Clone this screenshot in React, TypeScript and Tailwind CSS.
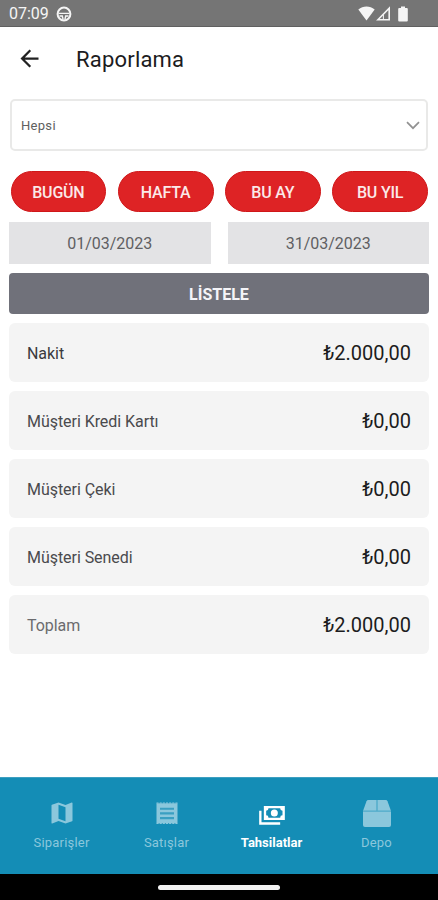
import React, { useState } from 'react'
import { MdMap, MdArrowBack } from 'react-icons/md'

const periods = ['BUGÜN', 'HAFTA', 'BU AY', 'BU YIL']

const rows = [
  { label: 'Nakit', value: '₺2.000,00', color: 'text-[#3a3a3d]' },
  { label: 'Müşteri Kredi Kartı', value: '₺0,00', color: 'text-[#4a4a4d]' },
  { label: 'Müşteri Çeki', value: '₺0,00', color: 'text-[#4a4a4d]' },
  { label: 'Müşteri Senedi', value: '₺0,00', color: 'text-[#4a4a4d]' },
  { label: 'Toplam', value: '₺2.000,00', color: 'text-[#6b6b6e]' },
]

function ReceiptIcon() {
  return (
    <svg viewBox="0 0 28 28" className="w-7 h-7">
      <path d="M3.5 4.3H24.5V24.2H3.5Z" fill="currentColor" />
      <path d="M3.5 4H24.5M3.5 24.5H24.5" stroke="currentColor" strokeWidth="1" strokeDasharray="2.1 1.05" />
      <path d="M7 9.7H21M7 14.4H21M7 19.1H21" stroke="#3a9fc1" strokeWidth="2.1" />
    </svg>
  )
}

function CashIcon() {
  return (
    <svg viewBox="0 0 24 24" className="w-7 h-7" fill="currentColor">
      <path d="M5,6H23V18H5V6M14,9A3,3 0 0,1 17,12A3,3 0 0,1 14,15A3,3 0 0,1 11,12A3,3 0 0,1 14,9M9,8A2,2 0 0,1 7,10V14A2,2 0 0,1 9,16H19A2,2 0 0,1 21,14V10A2,2 0 0,1 19,8H9M1,10H3V20H19V22H1V10Z" />
    </svg>
  )
}

function BoxIcon() {
  return (
    <svg viewBox="0 0 28 28" className="w-7 h-7">
      <path d="M5.3 1H22.7Q24 1 24.5 2.3L28 12V26Q28 28 26 28H2Q0 28 0 26V12L3.5 2.3Q4 1 5.3 1Z" fill="currentColor" />
      <path d="M14 1V12M0 12.1H28" stroke="#4fabc9" strokeWidth="1.4" />
    </svg>
  )
}

const tabs = [
  { id: 'siparisler', label: 'Siparişler', icon: <MdMap className="w-7 h-7" /> },
  { id: 'satislar', label: 'Satışlar', icon: <ReceiptIcon /> },
  { id: 'tahsilatlar', label: 'Tahsilatlar', icon: <CashIcon /> },
  { id: 'depo', label: 'Depo', icon: <BoxIcon /> },
]

function StatusBar() {
  return (
    <div className="h-[27px] flex-shrink-0 flex items-center justify-between bg-[#757575] border-b border-[#606060] pl-[9px] pr-[30px] pt-[2px] text-[#f5f5f5]">
      <div className="flex items-center gap-[7px]">
        <span className="text-[16px] leading-none">07:09</span>
        <svg viewBox="0 0 16 16" className="w-4 h-4 -mt-px" fill="none" stroke="currentColor">
          <circle cx="8" cy="8" r="6.4" strokeWidth="2" />
          <path d="M2.5 7.4H13.5M3.5 10h2.8l.8 3.6M12.5 10H9.7l-.8 3.6" strokeWidth="1.4" />
        </svg>
      </div>
      <div className="flex items-center -mt-px">
        <svg viewBox="0 0 17 15" className="w-[17px] h-[15px]" fill="currentColor">
          <path d="M0.3 3.6C5 -0.6 12 -0.6 16.7 3.6L8.5 14.6Z" />
        </svg>
        <svg viewBox="0 0 15 15" className="w-[15px] h-[15px] ml-px" fill="none" stroke="currentColor">
          <path d="M1.9 13.8L13.2 2.2V13.8Z" strokeWidth="1.6" />
          <path d="M7.4 13.8V8.6" strokeWidth="1" />
        </svg>
        <svg viewBox="0 0 10 16" className="w-[10px] h-4 ml-[7px]" fill="currentColor">
          <path d="M3 0.5h4v1.6h1.8a1 1 0 0 1 1 1V14.5a1 1 0 0 1-1 1H1.2a1 1 0 0 1-1-1V3.1a1 1 0 0 1 1-1H3Z" />
        </svg>
      </div>
    </div>
  )
}

export default function Raporlama() {
  const [activeTab, setActiveTab] = useState('tahsilatlar')

  return (
    <div className="w-full h-[900px] flex flex-col overflow-hidden bg-white font-['Roboto',sans-serif]">
      <StatusBar />

      <header className="h-[65px] flex-shrink-0 flex items-center pl-[16px]">
        <MdArrowBack className="w-[27px] h-[27px] -mt-[2px] text-[#222]" />
        <h1 className="ml-[33px] text-[22px] leading-none tracking-[0.2px] text-[#1c1c1e]">Raporlama</h1>
      </header>

      <main className="flex-1 flex flex-col px-[9px] pt-[7px]">
        {/* Ödeme tipi seçimi */}
        <div className="h-[52px] mx-px flex items-center justify-between rounded-[5px] border-2 border-[#e9e9e8] pl-[9px] pr-[6px]">
          <span className="mt-[2px] text-[13px] tracking-[0.3px] text-[#606060]">Hepsi</span>
          <svg viewBox="0 0 14 9" className="w-[14px] h-[9px]" fill="none" stroke="#929292" strokeWidth="1.7">
            <path d="M1 1.2L7 7.2L13 1.2" />
          </svg>
        </div>

        {/* Tarih aralığı */}
        <div className="grid grid-cols-4 gap-[11.5px] mt-5 ml-[1.5px] mr-px">
          {periods.map((p) => (
            <button key={p} className="h-[41px] pt-[2px] rounded-full bg-[#de2325] border border-[#cf1719] text-[16px] font-medium tracking-[-0.2px] text-[#fbe9e9]">
              {p}
            </button>
          ))}
        </div>
        <div className="grid grid-cols-2 gap-[17px] mt-[10px] text-[16px] text-[#5f5f62]">
          <div className="h-[42px] pt-[2px] flex items-center justify-center bg-[#e3e3e5]">01/03/2023</div>
          <div className="h-[42px] pt-[2px] flex items-center justify-center bg-[#e3e3e5]">31/03/2023</div>
        </div>
        <button className="h-[41px] pt-[2px] mt-[9px] rounded-[4px] bg-[#70717a] text-[16px] font-bold text-[#f4f4f8]">
          LİSTELE
        </button>

        {/* Tahsilat toplamları */}
        <div className="flex flex-col gap-[9px] mt-[9px]">
          {rows.map((row) => (
            <div key={row.label} className="h-[59px] flex items-center justify-between rounded-[6px] bg-[#f4f4f4] px-[18px]">
              <span className={`mt-[2px] text-[16px] tracking-[-0.05px] ${row.color}`}>{row.label}</span>
              <span className="text-[20px] text-[#1c1c20]">{row.value}</span>
            </div>
          ))}
        </div>
      </main>

      <nav className="h-[97px] flex-shrink-0 grid grid-cols-4 px-[9px] bg-[#148db6] border-t border-[#3d9fc0]">
        {tabs.map((tab) => (
          <button
            key={tab.id}
            onClick={() => setActiveTab(tab.id)}
            className={`flex flex-col items-center pt-[21px] text-[13px] leading-[15px] ${
              activeTab === tab.id ? 'font-bold text-white' : 'tracking-[0.2px] text-[#8bc7dc]'
            }`}
          >
            {tab.icon}
            <span className="mt-[8px]">{tab.label}</span>
          </button>
        ))}
      </nav>
      <div className="h-[26px] flex-shrink-0 flex justify-center pt-[11px] bg-black">
        <div className="w-[122px] h-[5px] rounded-full bg-[#f2f2f2]" />
      </div>
    </div>
  )
}
